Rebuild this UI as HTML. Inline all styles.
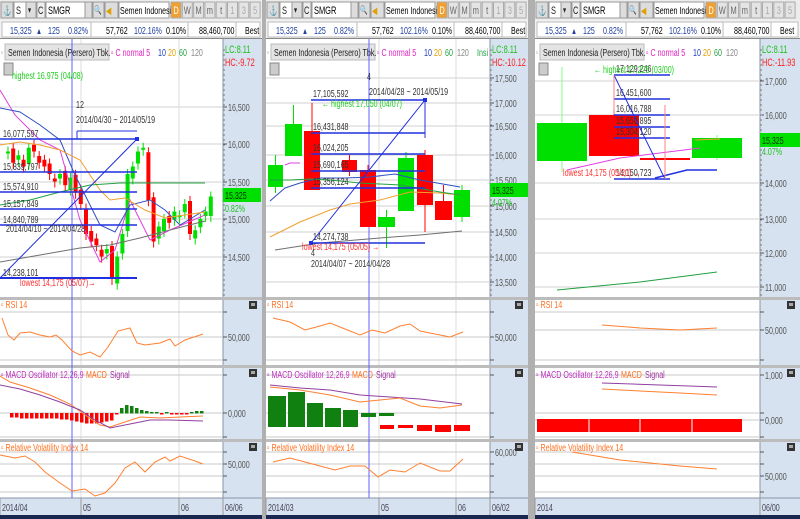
<!DOCTYPE html>
<html><head><meta charset="utf-8">
<style>
html,body{margin:0;padding:0;background:#c8c8c8;width:800px;height:519px;overflow:hidden}
svg{display:block;font-family:"Liberation Sans",sans-serif}
</style></head>
<body>
<svg id="s" width="800" height="519" viewBox="0 0 800 519" xmlns="http://www.w3.org/2000/svg"></svg>
<script>
var o='';
function R(x,y,w,h,f,st){o+='<rect x="'+x+'" y="'+y+'" width="'+w+'" height="'+h+'" fill="'+f+'"'+(st?' stroke="'+st+'" stroke-width="1"':'')+'/>';}
function L(x1,y1,x2,y2,c,w){o+='<line x1="'+x1+'" y1="'+y1+'" x2="'+x2+'" y2="'+y2+'" stroke="'+c+'" stroke-width="'+(w||1)+'"/>';}
function T(x,y,t,c,s,a){s=(s||9.5)+0.8;o+='<text transform="translate('+x+','+y+') scale(0.69,1)" fill="'+c+'" font-size="'+s+'"'+(a?' text-anchor="'+a+'"':'')+'>'+t+'</text>';}
function P(pts,c,w){o+='<polyline points="'+pts+'" fill="none" stroke="'+c+'" stroke-width="'+(w||1)+'"/>';}

function panel(x0,w,ax,lc,hc,ticks,subTicks,dates,vgrid,cursor){
  var x1=x0+w;
  R(x0,0,w,519,'#fff');
  R(x0,0,w,20,'#ececec');
  R(x0+1,2,12,16,'#dcdcdc','#999');T(x0+3,14,'⚓','#333',9);
  R(x0+14,2,12,16,'#fff','#999');T(x0+16,14,'S','#222',10);
  R(x0+26,2,10,16,'#ddd','#999');T(x0+28,13,'▾','#222',8);
  R(x0+37,2,8,16,'#eee','#999');T(x0+38,14,'C','#222',10);
  R(x0+46,2,42,16,'#fff','#999');T(x0+48,14,'SMGR','#000',10);
  R(x0+85,2,7,16,'#ddd','#999');
  R(x0+93,2,11,16,'#ddd','#999');T(x0+94,13,'🔍','#225',8);
  R(x0+105,2,13,16,'#ddd','#999');T(x0+106,14,'◀','#e0a000',9);
  R(x0+119,2,50,16,'#fff','#999');T(x0+120,14,'Semen Indonesi','#000',9.5);
  var b=[['D','#f0a030','#fff'],['W','#e4e4e4','#666'],['M','#e4e4e4','#666'],['m','#e4e4e4','#666'],['t','#e4e4e4','#666'],['1','#e4e4e4','#aaa'],['3','#e4e4e4','#aaa'],['5','#e4e4e4','#aaa']];
  for(var i=0;i<b.length;i++){var bx=x0+171+i*11.3;R(bx,2,10,16,b[i][1],'#aaa');T(bx+5,14,b[i][0],b[i][2],10,'middle');}
  R(x0,20,w,18,'#f2f2f2');R(x0+2,22,w-4,15,'#fff','#bbb');
  L(x0+91,22,x0+91,37,'#bbb');L(x0+188,22,x0+188,37,'#bbb');L(x0+236,22,x0+236,37,'#bbb');
  T(x0+10,34,'15,325','#2040a0',9.5);T(x0+36,34,'▲','#2040a0',8);T(x0+48,34,'125','#2040a0',9.5);T(x0+68,34,'0.82%','#2040a0',9.5);
  T(x0+106,34,'57,762','#000',9.5);T(x0+134,34,'102.16%','#2040a0',9.5);T(x0+166,34,'0.10%','#000',9.5);
  T(x0+199,34,'88,460,700','#000',9.5);T(x0+245,34,'Best','#000',9.5);
  L(x0,38.5,x1,38.5,'#888');
  R(ax,39,x1-ax,459,'#d6e2ef');L(ax,39,ax,498,'#8a96a8');
  ticks.forEach(function(t){L(x0,t[0],ax,t[0],'#d0d0d0');L(ax,t[0],ax+4,t[0],'#555');T(ax+5,t[0]+4,t[1],'#555',9.5);});
  for(var y=50;y<297;y+=5){L(ax,y,ax+2,y,'#777');}
  vgrid.forEach(function(v){L(v,39,v,498,'#dcdcdc');});
  [297,365,439].forEach(function(y){R(x0,y,w,3,'#bcbcbc');});
  subTicks.forEach(function(t){L(x0,t[0],ax,t[0],'#c8c8c8');L(ax,t[0],ax+4,t[0],'#555');if(t[1])T(ax+5,t[0]+4,t[1],'#555',9.5);});
  [301,369,443].forEach(function(y){R(x1-13,y,8,8,'#333');R(x1-11,y+2,4,3,'#aaa');});
  R(x0+5,44,104,16,'#e4e4e4','#bbb');T(x0+1,55,'▫','#777',7);T(x0+8,56,'Semen Indonesia (Persero) Tbk.','#222',9.5);
  T(x0+111,56,'▫ C normal 5','#e020c0',9.5);T(x0+158,56,'10','#2040c0',9.5);T(x0+168,56,'20','#e0a000',9.5);T(x0+179,56,'60','#20a040',9.5);T(x0+191,56,'120','#888',9.5);
  R(x0+4,63,9,12,'#ccc','#888');
  T(ax+2,53,lc,'#20c020',10);T(ax+2,66,hc,'#ff2020',10);
  T(x0+1,308,'▫ RSI 14','#ff7020',9.5);
  T(x0+1,378,'▫ MACD Oscillator 12,26,9','#c030c0',9.5);T(x0+86,378,'MACD','#ff7020',9.5);T(x0+110,378,'Signal','#a030a0',9.5);
  T(x0+1,451,'▫ Relative Volatility Index 14','#ff7020',9.5);
  R(x0,498,w,17,'#d6e2ef');L(x0,498,x1,498,'#8a96a8');L(ax,498,ax,515,'#8a96a8');
  dates.forEach(function(d){L(d[0],498,d[0],515,'#999');T(d[0]+2,511,d[1],'#445',9.5);});
  R(x0,515,w,4,'#1a2850');
  if(cursor)L(cursor,39,cursor,498,'#6060ff',1);
}
R(262,0,4,519,'#b0b0b0');R(528,0,7,519,'#b0b0b0');

panel(0,262,223,'LC:8.11','HC:-9.72',[[107,'16,500'],[144,'16,000'],[182,'15,500'],[219,'15,000'],[257,'14,500']],
 [[312,''],[337,'50,000'],[360,''],[375,''],[413,'0,000'],[437,''],[452,''],[464,'50,000'],[476,''],[492,'']],
 [[0,'2014/04'],[81,'05'],[179,'06'],[223,'06/06']],[81,179],72);
(function(){
 var c=[15900,15750,15850,15700,15950,15900,15750,15700,15600,15500,15600,15450,15550,15350,15200,14800,14700,14650,14500,14600,14200,14500,14800,15600,15700,15900,15950,15250,14700,14900,15000,14950,15100,15050,15200,14800,14850,15000,15100,15300];
 function y(p){return 144-(p-16000)*0.075;}
 var prev=15950;
 for(var i=0;i<c.length;i++){var op=prev+(i%3==0?-60:40),cl=c[i];var x=8+i*5.2;var up=cl>op;var col=up?'#00e000':'#ff0000';
  var t=y(Math.max(op,cl)),bt=y(Math.min(op,cl));if(bt-t<2)bt=t+2;
  L(x,t-5,x,bt+6,col);R(x-2,t,4,bt-t,col);prev=cl;}
})();
P('0,90 15,115 40,140 60,150 80,220 100,262 115,250 130,200 150,240 170,230 205,215','#e040e0');
P('0,108 20,112 40,125 60,140 75,175 100,225 115,232 130,205 150,200 165,210 180,225 205,210','#3050c0');
P('0,145 20,142 40,145 60,150 80,160 100,190 110,200 125,198 145,210 165,218 205,212','#f0a030');
P('0,205 30,200 60,192 90,185 120,183 150,183 205,183','#20a040');
P('0,262 40,255 80,248 110,245 140,238 170,230 205,221','#707070');
[[139,'16,077,597'],[172,'15,839,797'],[192,'15,574,910'],[209,'15,157,849'],[225,'14,840,789'],[278,'14,238,101']].forEach(function(f){L(0,f[0],137,f[0],'#2030e0',1.5);T(3,f[0]-2,f[1],'#333',9.5);});
L(0,278,137,278,'#2030e0',2);L(0,278,137,139,'#2030e0',1);R(135,137,4,4,'#2030e0');
L(77,131,137,131,'#2030e0');L(77,131,77,139,'#2030e0');
T(76,108,'12','#333',9.5);T(76,123,'2014/04/30 ~ 2014/05/19','#333',9.5);
T(6,232,'2014/04/10 ~ 2014/04/28','#333',9.5);
T(20,286,'lowest 14,175 (05/07)','#ff3030',9.5);T(88,286,'→','#ff2020',10);
T(12,79,'highest 16,975 (04/08)','#20d020',9.5);
R(223,188,38,14,'#00e000');T(225,199,'15,325','#003300',9.5);T(225,212,'0.82%','#20c020',9.5);
P('2,318 8,335 14,340 20,333 30,332 40,335 50,337 56,335 62,340 72,351 80,355 90,352 100,357 108,347 118,331 130,328 137,343 145,345 160,343 170,339 175,346 185,340 203,334','#ff8030');
(function(){var h=[-4,-4,-5,-5,-5,-5,-5,-5,-5,-5,-6,-6,-7,-8,-9,-10,-10,-10,-9,-8,-7,-1,5,8,7,5,3,2,1,1,-1,1,-1,-1,-1,-1,1,2,2];
 for(var i=0;i<h.length;i++){var x=10+i*5;var v=h[i];R(x,v<0?413:413-v,3.5,Math.abs(v)+0.5,v<0?'#ff0000':'#108010');}})();
P('0,376 10,382 30,388 50,395 70,404 85,415 100,425 110,427 125,422 140,417 160,418 180,417 203,416','#ff8030');
P('0,385 20,389 40,395 60,402 80,410 95,420 110,428 130,424 150,420 170,420 203,421','#9040a0');
P('0,455 15,458 25,456 35,462 45,472 60,483 72,491 85,489 95,496 105,493 115,483 125,468 135,462 145,472 155,462 165,457 170,461 180,456 195,461 203,464','#ff8030');

panel(266,262,490,'LC:8.11','HC:-10.12',[[78,'17,500'],[103,'17,000'],[126,'16,500'],[155,'16,000'],[180,'15,500'],[206,'15,000'],[232,'14,500'],[257,'14,000'],[282,'13,500']],
 [[312,''],[337,'50,000'],[360,''],[375,''],[413,''],[437,''],[452,'60,000'],[464,''],[476,''],[492,'']],
 [[266,'2014/03'],[379,'05'],[456,'06'],[490,'06/02']],[379,456],369);
T(477,56,'Insi','#20a040',9.5);
[[268,165,15,22,155,193,'#00e000'],[285,124,17,32,105,156,'#00e000'],[304,131,16,59,103,190,'#ff0000'],[342,160,15,12,155,176,'#ff0000'],[360,170,16,57,165,227,'#ff0000'],[378,217,17,10,210,248,'#00e000'],[398,158,16,53,152,211,'#00e000'],[417,155,16,50,150,232,'#ff0000'],[435,201,17,19,185,220,'#ff0000'],[454,190,16,27,185,222,'#00e000']].forEach(function(k){L(k[0]+k[2]/2,k[4],k[0]+k[2]/2,k[5],k[6]);R(k[0],k[1],k[2],k[3],k[6]);});
P('270,201 285,188 300,183 320,178 345,178 370,177 395,174 420,180 460,187','#3050c0');
P('270,237 300,222 330,210 350,204 380,200 410,192 440,193 460,195','#f0a030');
P('270,180 290,180 310,179 330,180 360,183 400,185 440,192 460,195','#20a040');
P('275,250 320,243 380,238 420,235 462,231','#707070');
P('285,165 290,163 300,163','#e040e0');
[[100,'17,105,592'],[133,'16,431,848'],[154,'16,024,205'],[171,'15,690,165'],[188,'15,356,124'],[243,'14,274,738']].forEach(function(f){L(311,f[0],425,f[0],'#2030e0',1.5);T(313,f[0]-3,f[1],'#333',9.5);});
L(311,243,425,100,'#2030e0');R(309,241,4,4,'#2030e0');R(423,98,4,4,'#2030e0');L(425,100,425,138,'#2030e0');
T(367,80,'4','#333',9.5);T(369,95,'2014/04/28 ~ 2014/05/19','#333',9.5);
T(322,107,'← highest 17,050 (04/07)','#20d020',9.5);
T(302,250,'lowest 14,175 (05/05)  →','#ff3030',9.5);T(311,256,'4','#333',9.5);T(311,267,'2014/04/07 ~ 2014/04/28','#333',9.5);
R(490,183,38,14,'#00e000');T(492,194,'15,325','#003300',9.5);T(492,206,'4.07%','#20c020',9.5);
P('273,318 290,322 305,330 320,326 330,323 345,329 360,335 372,330 385,333 400,326 410,324 420,331 440,335 450,337 463,332','#ff8030');
[[268,396,18,30],[288,392,17,34],[307,403,16,23],[325,408,16,18],[343,410,15,16],[361,413,15,3],[379,413,15,2]].forEach(function(k){R(k[0],k[1],k[2],k[3]+1,'#108010');});
[[380,425,14,4],[398,425,15,3],[417,425,15,6],[435,425,16,7],[454,425,16,6]].forEach(function(k){R(k[0],k[1],k[2],k[3],'#ff0000');});
P('270,385 300,388 330,390 360,395 390,397 420,399 462,404','#9040a0');
P('270,387 300,390 330,395 360,402 380,400 400,398 420,406 440,408 462,405','#ff8030');
P('273,462 290,458 305,462 320,466 335,470 350,466 365,466 378,477 390,470 405,472 420,463 440,471 450,471 463,459','#ff8030');

panel(535,265,760,'LC:8.11','HC:-11.93',[[81,'17,000'],[115,'16,000'],[183,'14,000'],[219,'13,000'],[253,'12,000'],[287,'11,000']],
 [[312,''],[330,'50,000'],[360,''],[375,'1,000'],[413,''],[420,'0,000'],[437,''],[452,''],[464,''],[476,'50,000'],[492,'']],
 [[535,'2014'],[760,'06/00']],[],0);
L(562,67,562,172,'#80ff80');R(537,123,50,38,'#00e000');
L(614,80,614,156,'#ff6060');R(589,115,50,41,'#ff0000');
R(640,158,50,2,'#ff0000');
L(717,135,717,160,'#80ff80');R(692,138,50,20,'#00e000');
P('567,170 620,158 700,148','#e040e0');P('695,140 720,139','#f0a030');
P('655,178 687,170 717,170','#2030e0',1.5);P('557,290 640,282 717,272','#20a040');
[[75,'17,129,246'],[99,'16,451,600'],[115,'16,016,788'],[127,'15,650,895'],[138,'15,304,120'],[179,'14,150,723']].forEach(function(f){L(614,f[0],670,f[0],'#2030e0',1.5);T(616,f[0]-3,f[1],'#333',9.5);});
L(614,75,665,179,'#2030e0');L(665,179,665,105,'#ff8080');L(614,75,614,110,'#ff8080');
T(594,73,'← highest 17,225 (03/00)','#20d020',9.5);
T(563,176,'lowest 14,175 (05/20)  →','#ff3030',9.5);
R(760,133,40,14,'#00e000');T(762,144,'15,325','#003300',9.5);T(762,155,'4.07%','#20c020',9.5);
P('602,325 640,328 680,330 717,328','#ff8030');
P('602,389 640,391 680,393 717,395','#ff8030');P('602,383 660,385 717,387','#9040a0');
R(537,419,205,13,'#ff0000');L(589,419,589,432,'#fff');L(640,419,640,432,'#fff');L(692,419,692,432,'#fff');
P('572,452 620,460 680,466 717,469','#ff8030');
document.getElementById('s').innerHTML=o;
</script>
</body></html>
